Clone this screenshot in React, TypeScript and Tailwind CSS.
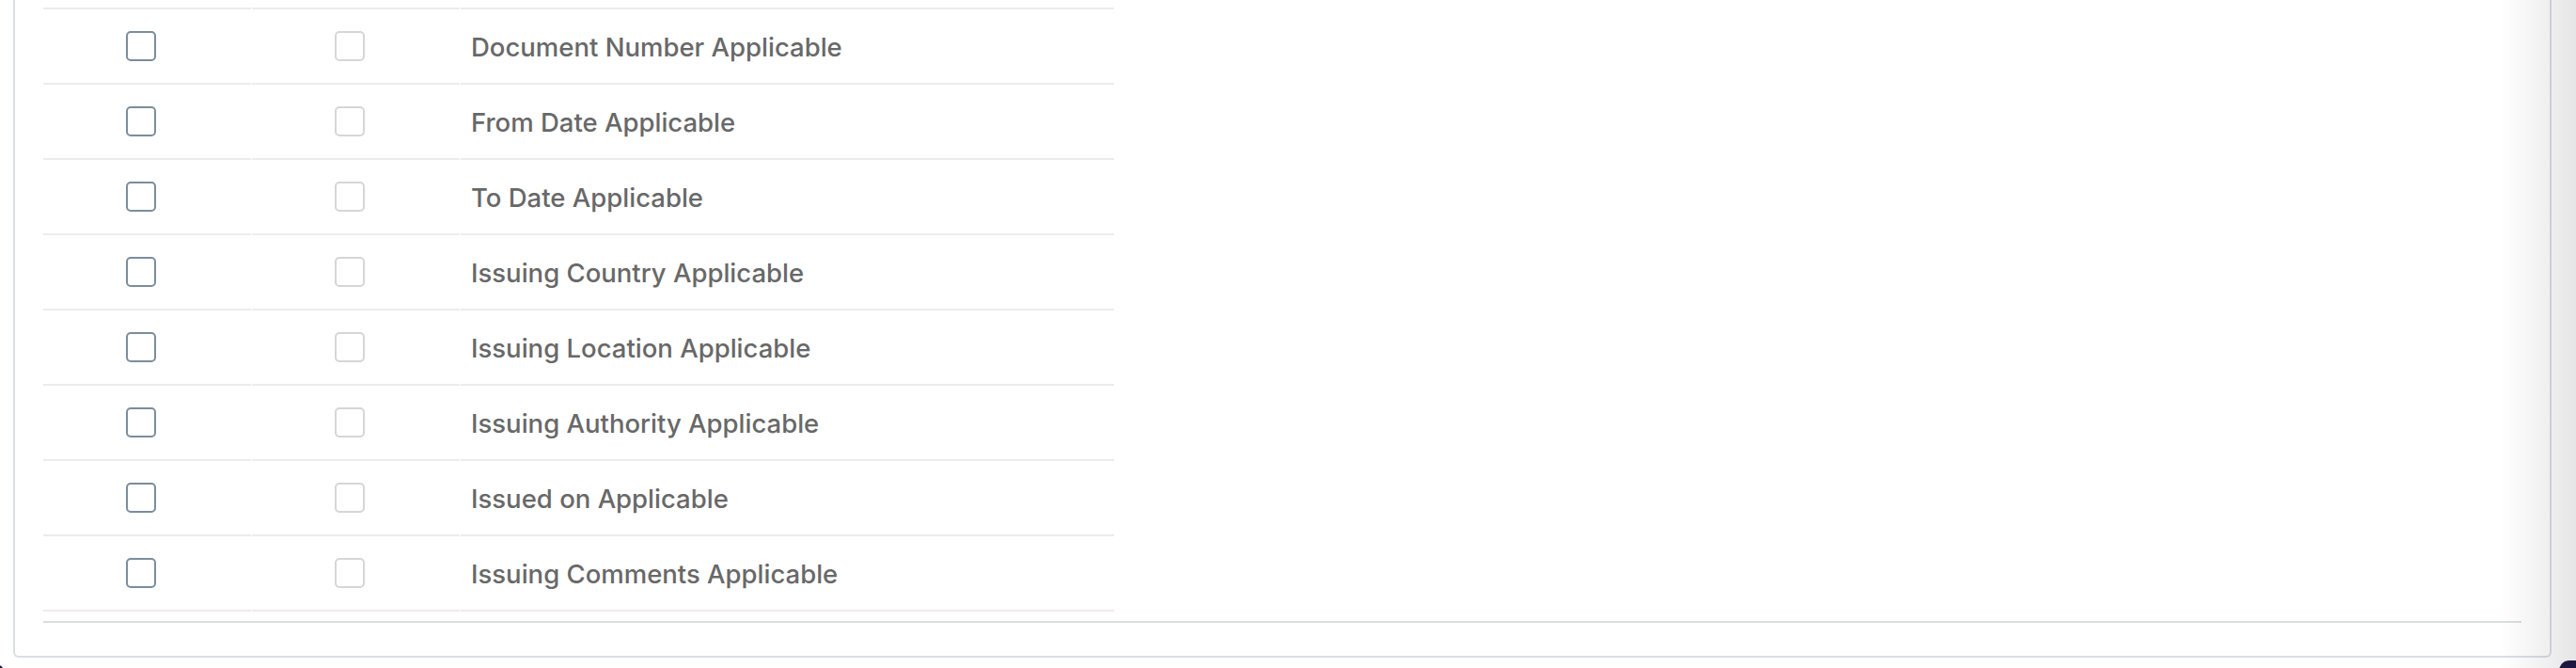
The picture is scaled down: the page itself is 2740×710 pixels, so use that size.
const rows = [
  "Document Number Applicable",
  "From Date Applicable",
  "To Date Applicable",
  "Issuing Country Applicable",
  "Issuing Location Applicable",
  "Issuing Authority Applicable",
  "Issued on Applicable",
  "Issuing Comments Applicable",
];

export default function App() {
  return (
    <div className="relative w-[2740px] h-[710px] overflow-hidden bg-white" style={{ fontFamily: "Inter, 'Liberation Sans', sans-serif" }}>
      <div className="ml-[14px] w-[2700px] border-2 border-t-0 border-[#d9dee3] rounded-b-[6px] px-[30px] pt-[8px] pb-[35px]">
        <div className="w-[1139px]">
          {rows.map((label) => (
            <div key={label} className="grid grid-cols-[221px_221px_695px] gap-x-[1px]">
              <div className="h-[80px] border-t-2 border-[#ececec] flex items-center pl-[88px]">
                <span className="w-[32px] h-[32px] rounded-[5px] border-2 border-[#7c8d9b] bg-white" />
              </div>
              <div className="h-[80px] border-t-2 border-[#ececec] flex items-center pl-[88px]">
                <span className="w-[32px] h-[32px] rounded-[5px] border-2 border-[#d6d6d6] bg-white" />
              </div>
              <div className="h-[80px] border-t-2 border-[#ececec] flex items-center pl-[11px] pt-[4px] text-[27.5px] font-medium text-[#686868]">
                {label}
              </div>
            </div>
          ))}
          <div className="grid grid-cols-[221px_221px_695px] gap-x-[1px]">
            <div className="border-t-2 border-[#ececec]" />
            <div className="border-t-2 border-[#ececec]" />
            <div className="border-t-2 border-[#ececec]" />
          </div>
        </div>
        <div className="mt-[10px] border-t-2 border-[#d9dee3]" />
      </div>
      {/* drawer shadow on the right edge */}
      <div className="pointer-events-none absolute right-0 top-0 h-full w-[80px] bg-gradient-to-r from-transparent to-black/10" />
      <div className="absolute right-[-14px] bottom-[-14px] w-[32px] h-[22px] rounded-full bg-[#1d1840]" />
      <div className="absolute left-[-6px] bottom-[-6px] w-[9px] h-[9px] rounded-full bg-[#1d1840]" />
    </div>
  );
}
